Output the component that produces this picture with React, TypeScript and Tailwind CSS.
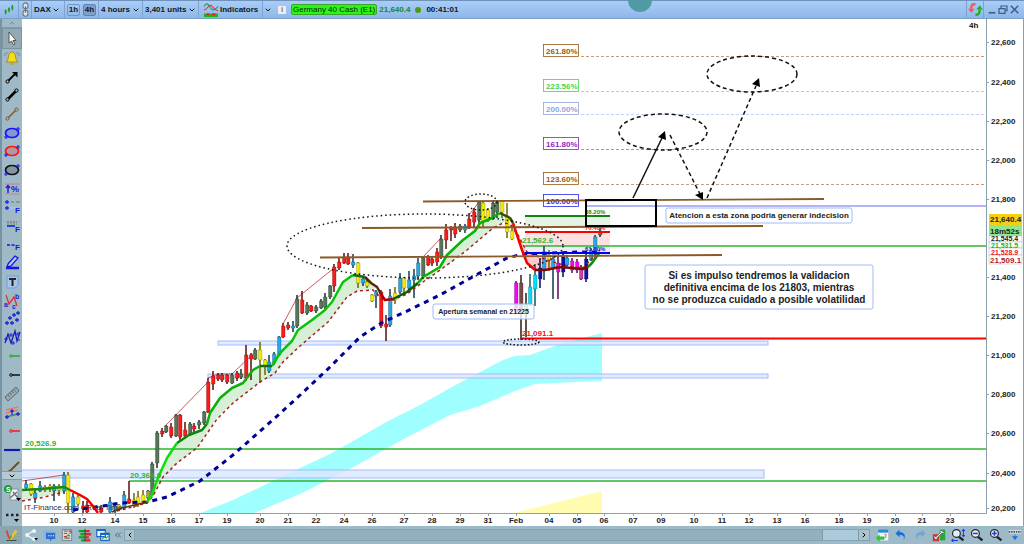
import { ReactNode } from "react";
import { ChevronDown, ChevronLeft, ChevronRight, ChevronUp, ChevronsLeft } from "lucide-react";

const GRAY = "#56755a";
const RED = "#ff1a1a";
const BLUE = "#27a8e6";
const YELLOW = "#f4ea00";
const CYAN = "#00dff5";
const MAGENTA = "#f0f";
const NAVY = "#1010a8";

const wicks: Record<string, string> = {
  [GRAY]: "#1d2b1d",
  [RED]: "#5c0b0b",
  [BLUE]: "#123a4d",
  [YELLOW]: "#6b6600",
  [CYAN]: "#0b5a60",
  [MAGENTA]: "#5a065a",
  [NAVY]: "#0a0a50",
};

// x, high, low, body top, body bottom, colour
type Candle = [number, number, number, number, number, string];

const candles: Candle[] = [
  [26, 480, 490, 484, 488, BLUE],
  [31, 483, 496, 484, 494, YELLOW],
  [35, 488, 503, 493, 498, BLUE],
  [40, 481, 492, 486, 491, BLUE],
  [45, 485, 492, 487, 490, YELLOW],
  [50, 484, 492, 486, 489, YELLOW],
  [54, 484, 501, 486, 491, BLUE],
  [59, 484, 496, 486, 490, YELLOW],
  [64, 472, 494, 475, 491, BLUE],
  [68, 472, 513, 475, 503, YELLOW],
  [73, 493, 513, 497, 512, BLUE],
  [78, 495, 506, 497, 504, YELLOW],
  [83, 501, 513, 506, 509, RED],
  [87, 501, 513, 505, 512, RED],
  [101, 505, 513, 508, 512, RED],
  [110, 497, 513, 502, 512, BLUE],
  [115, 504, 513, 506, 511, BLUE],
  [119, 504, 510, 505, 509, YELLOW],
  [124, 491, 510, 495, 508, BLUE],
  [129, 481, 504, 499, 503, RED],
  [134, 493, 508, 500, 505, YELLOW],
  [138, 491, 507, 497, 504, YELLOW],
  [143, 490, 504, 495, 502, YELLOW],
  [148, 490, 500, 491, 498, "#9aae20"],
  [152, 462, 496, 464, 495, GRAY],
  [157, 431, 468, 433, 463, GRAY],
  [162, 428, 437, 431, 434, RED],
  [166, 425, 433, 426, 432, GRAY],
  [171, 423, 438, 427, 436, RED],
  [176, 414, 437, 415, 436, GRAY],
  [180, 414, 440, 415, 437, RED],
  [185, 422, 439, 430, 436, RED],
  [190, 422, 436, 424, 434, GRAY],
  [194, 423, 434, 426, 429, RED],
  [199, 420, 429, 422, 425, GRAY],
  [204, 411, 425, 412, 423, GRAY],
  [208, 378, 413, 382, 412, RED],
  [213, 371, 390, 376, 384, RED],
  [218, 373, 381, 375, 379, RED],
  [222, 373, 382, 375, 380, RED],
  [227, 374, 384, 375, 382, RED],
  [232, 373, 384, 375, 383, GRAY],
  [237, 371, 381, 373, 378, RED],
  [241, 369, 379, 374, 377, GRAY],
  [246, 345, 381, 355, 378, RED],
  [251, 353, 380, 355, 359, RED],
  [255, 348, 360, 350, 359, GRAY],
  [260, 342, 383, 350, 360, YELLOW],
  [265, 359, 375, 360, 366, YELLOW],
  [269, 355, 373, 362, 371, BLUE],
  [274, 352, 365, 354, 363, BLUE],
  [279, 336, 356, 337, 355, BLUE],
  [283, 323, 338, 326, 337, RED],
  [288, 322, 330, 325, 328, RED],
  [293, 321, 332, 326, 328, BLUE],
  [297, 295, 328, 299, 326, GRAY],
  [302, 291, 314, 300, 313, RED],
  [307, 302, 315, 305, 313, GRAY],
  [311, 305, 312, 306, 311, RED],
  [316, 305, 313, 307, 311, GRAY],
  [321, 299, 309, 301, 308, GRAY],
  [325, 293, 309, 297, 307, GRAY],
  [330, 285, 299, 286, 297, GRAY],
  [334, 264, 292, 267, 286, RED],
  [339, 258, 270, 262, 268, RED],
  [344, 253, 264, 257, 263, RED],
  [348, 253, 265, 257, 264, RED],
  [353, 254, 268, 262, 265, BLUE],
  [358, 262, 288, 263, 283, YELLOW],
  [363, 276, 286, 279, 283, BLUE],
  [367, 280, 288, 282, 286, YELLOW],
  [372, 294, 302, 295, 301, YELLOW],
  [376, 290, 308, 292, 296, BLUE],
  [381, 290, 328, 292, 326, RED],
  [386, 315, 341, 324, 327, RED],
  [390, 289, 327, 296, 325, BLUE],
  [395, 287, 304, 293, 300, YELLOW],
  [400, 273, 294, 278, 292, BLUE],
  [404, 277, 295, 278, 288, YELLOW],
  [409, 271, 292, 280, 288, BLUE],
  [414, 269, 298, 276, 280, BLUE],
  [418, 258, 280, 263, 276, BLUE],
  [423, 256, 279, 258, 276, GRAY],
  [428, 255, 266, 257, 265, RED],
  [432, 257, 266, 259, 263, RED],
  [437, 248, 266, 252, 262, RED],
  [441, 235, 259, 239, 257, GRAY],
  [446, 224, 249, 230, 240, RED],
  [451, 226, 241, 228, 230, RED],
  [455, 223, 238, 227, 234, RED],
  [460, 224, 232, 226, 230, GRAY],
  [465, 224, 233, 226, 230, BLUE],
  [469, 213, 229, 219, 227, RED],
  [474, 208, 228, 212, 222, RED],
  [479, 201, 224, 202, 220, GRAY],
  [483, 201, 227, 203, 222, YELLOW],
  [488, 208, 222, 210, 220, YELLOW],
  [493, 200, 220, 203, 218, GRAY],
  [497, 200, 218, 202, 212, GRAY],
  [502, 200, 218, 201, 212, YELLOW],
  [507, 203, 238, 216, 232, YELLOW],
  [512, 225, 240, 231, 239, YELLOW],
  [516, 281, 313, 283, 312, MAGENTA],
  [521, 275, 340, 283, 309, "#7a4b4b"],
  [526, 293, 337, 304, 313, "#10e010"],
  [530, 274, 306, 287, 304, CYAN],
  [535, 264, 306, 275, 289, CYAN],
  [540, 258, 288, 268, 279, NAVY],
  [544, 246, 280, 253, 269, BLUE],
  [549, 250, 271, 255, 260, YELLOW],
  [553, 256, 299, 259, 269, BLUE],
  [558, 256, 299, 263, 272, MAGENTA],
  [563, 254, 277, 257, 272, NAVY],
  [567, 255, 266, 258, 265, BLUE],
  [572, 258, 273, 261, 270, MAGENTA],
  [577, 259, 273, 262, 270, MAGENTA],
  [581, 265, 280, 267, 279, "#d040a0"],
  [586, 254, 282, 259, 279, NAVY],
  [591, 248, 261, 251, 260, BLUE],
  [595, 235, 259, 237, 253, BLUE],
  [600, 227, 237, 231, 235, GRAY],
];

const priceLabels: [string, number][] = [
  ["22,600", 42],
  ["22,400", 82],
  ["22,200", 121],
  ["22,000", 160],
  ["21,800", 199],
  ["21,400", 277],
  ["21,200", 316],
  ["21,000", 355],
  ["20,800", 394],
  ["20,600", 433],
  ["20,400", 473],
  ["20,200", 508],
];

const timeLabels: [string, number][] = [
  ["10", 54], ["12", 82], ["14", 115], ["15", 143], ["16", 171], ["17", 199], ["19", 227],
  ["20", 260], ["21", 288], ["22", 316], ["24", 344], ["26", 372], ["27", 404], ["28", 432],
  ["29", 460], ["31", 488], ["Feb", 516], ["04", 549], ["05", 577], ["06", 604], ["07", 633],
  ["09", 661], ["10", 694], ["11", 722], ["12", 749], ["13", 777], ["16", 805], ["18", 839],
  ["19", 867], ["20", 895], ["21", 922], ["23", 950],
];

const extensions = [
  { label: "261.80%", y: 56, color: "#965a1e", line: "#c89a76" },
  { label: "223.56%", y: 91, color: "#4bd24b", line: "#9be59b" },
  { label: "200.00%", y: 114, color: "#8ea4e0", line: "#c3d0fa" },
  { label: "161.80%", y: 149, color: "#8f1fc0", line: "#c77ae4" },
  { label: "123.60%", y: 184, color: "#965a1e", line: "#c89a76" },
  { label: "100.00%", y: 206, color: "#2a2aee", line: "" },
];

const tools: { name: string; art: ReactNode }[] = [
  {
    name: "Pointer",
    art: <path d="M6 3v11l2.500-2 2 4 1.500-1-2-3.500h3z" fill="#fff" stroke="#555" />,
  },
  {
    name: "Alert",
    art: (
      <>
        <path d="M3 13c2-1 2-3 2.500-6C6 4 7.500 3 9 3s3 1 3.500 4c.5 3 .5 5 2.500 6z" fill="#f5dc1c" stroke="#9c8300" strokeWidth=".8" />
        <circle cx="9" cy="14.500" r="1.500" fill="#c8a800" />
        <path d="M2 4v3M16 4v3M4 3v2M14 3v2" stroke="#6f7f88" strokeWidth=".8" />
      </>
    ),
  },
  {
    name: "Arrow",
    art: (
      <>
        <path d="M5 13l7-7" stroke="#000" strokeWidth="1.800" />
        <path d="M9 4h5.500v5.500z" fill="#000" />
        <circle cx="4.500" cy="13.500" r="1.600" fill="#9fbac6" stroke="#000" />
      </>
    ),
  },
  {
    name: "Segment",
    art: (
      <>
        <path d="M5 13l8-8" stroke="#000" strokeWidth="2.500" />
        <circle cx="4.500" cy="13.500" r="1.600" fill="#9fbac6" stroke="#000" />
        <circle cx="13.500" cy="4.500" r="1.600" fill="#9fbac6" stroke="#000" />
      </>
    ),
  },
  {
    name: "Brown segment",
    art: (
      <>
        <path d="M5 13l8-8" stroke="#8a5216" strokeWidth="1.500" />
        <circle cx="4.500" cy="13.500" r="1.600" fill="#9fbac6" stroke="#8a5216" />
        <circle cx="13.500" cy="4.500" r="1.600" fill="#9fbac6" stroke="#8a5216" />
      </>
    ),
  },
  { name: "Blue ellipse", art: <EllipseArt color="#1414ff" /> },
  { name: "Red ellipse", art: <EllipseArt color="#ff1414" /> },
  { name: "Black ellipse", art: <EllipseArt color="#111" /> },
  {
    name: "Percent change",
    art: (
      <>
        <path d="M2 4h15M2 14h15" stroke="#d87a8a" />
        <text x="8" y="12" fontSize="9" fontWeight="bold" fill="#2222d0">%</text>
        <path d="M5 13V6M3 8l2-2.500L7 8" fill="none" stroke="#2222d0" strokeWidth="1.500" />
      </>
    ),
  },
  {
    name: "Fibonacci extension",
    art: (
      <>
        <path d="M2 4h4M4 2v4M2 10h4M4 8v4" stroke="#2222ee" strokeWidth="1.300" />
        <path d="M8 4h3M13 4h4" stroke="#8a6a3a" />
        <path d="M7 10h6" stroke="#b8ccf5" />
        <text x="12" y="15" fontSize="8" fontWeight="bold" fill="#1414e6">F</text>
      </>
    ),
  },
  {
    name: "Fibonacci retracement",
    art: (
      <>
        <path d="M4 5h10" stroke="#7a5a5a" strokeDasharray="2 1" />
        <path d="M4 7h10" stroke="#5aa05a" strokeDasharray="2 1" />
        <path d="M4 9h8" stroke="#1414e6" strokeWidth="1.500" />
        <text x="12" y="15" fontSize="8" fontWeight="bold" fill="#1414e6">F</text>
      </>
    ),
  },
  {
    name: "Fibonacci level",
    art: (
      <>
        <path d="M4 9h3M8.500 9h3" stroke="#1414e6" strokeWidth="1.500" />
        <text x="12" y="14" fontSize="8" fontWeight="bold" fill="#1414e6">F</text>
      </>
    ),
  },
  {
    name: "Pencil",
    art: (
      <>
        <path d="M5 10l7-8 3 2-7 8-4 1z" fill="#b8cdf5" stroke="#1414e6" strokeWidth="1.300" />
        <path d="M3 14h13" stroke="#1414e6" strokeWidth="2.500" />
      </>
    ),
  },
  {
    name: "Text",
    art: (
      <>
        <path d="M4 3h11v9l-3 3H4z" fill="#a9c4e4" stroke="#6a9cec" />
        <path d="M6 6h7M9.500 6v7" stroke="#222" strokeWidth="2" />
      </>
    ),
  },
  {
    name: "Abc pattern",
    art: (
      <>
        <path d="M3 3l3 9 5-7 3 9" fill="none" stroke="#e03040" strokeWidth="1.300" />
        <text x="1" y="15" fontSize="7" fontWeight="bold" fill="#2222d0">a</text>
        <text x="12" y="7" fontSize="7" fontWeight="bold" fill="#2222d0">b</text>
        <text x="9" y="17" fontSize="7" fontWeight="bold" fill="#2222d0">c</text>
      </>
    ),
  },
  {
    name: "Cycle points",
    art: (
      <path
        d="M2 13h4M4 11v4M5 8h4M7 6v4M7 13h4M9 11v4M9 5h4M11 3v4M12 10h4M14 8v4M13 3h4M15 1v4"
        stroke="#2222d8"
        strokeWidth="1.300"
      />
    ),
  },
  {
    name: "Elliott wave",
    art: (
      <>
        <path d="M2 14l3-9 3 9 4-12 2 10 3-9" fill="none" stroke="#1c1cae" strokeWidth="1.300" />
        <path d="M1 10h4M3 8v4M6 6h4M8 4v4M8 14h4M10 12v4M13 5h4M15 3v4M13 11h4" stroke="#2222d8" />
      </>
    ),
  },
  { name: "Green ray", art: <RayArt color="#22a822" /> },
  { name: "Black ray", art: <RayArt color="#111" /> },
  {
    name: "Ruler",
    art: (
      <>
        <path d="M2 12L13 2l3 4L5 16z" fill="#9aaab0" stroke="#5c6a70" />
        <path d="M5 10l1.500 2M7 8l1.500 2M9 6l1.500 2M11 4.500l1.500 2" stroke="#5c6a70" />
      </>
    ),
  },
  {
    name: "Channel",
    art: (
      <>
        <path d="M3 7l12-3M3 10l12-3" stroke="#e87868" strokeWidth="1.300" />
        <path d="M3 14l12-3" stroke="#2c9c3c" strokeWidth="1.500" />
        <path d="M2 14h4M4 12v4M13 11h4M15 9v4M9 12V7M7.500 8.500L9 7l1.500 1.500" fill="none" stroke="#2222d8" strokeWidth="1.300" />
      </>
    ),
  },
  { name: "Red ray", art: <RayArt color="#ff1414" /> },
  { name: "Horizontal line", art: <path d="M1 9h16" stroke="#1414b4" strokeWidth="2.200" /> },
];

function EllipseArt({ color }: { color: string }) {
  return (
    <>
      <ellipse cx="9" cy="9" rx="6.500" ry="4.500" fill={color} fillOpacity=".2" stroke={color} strokeWidth="1.700" />
      <path d="M1 13h4M3 11v4M13 5h4M15 3v4" stroke="#2222ee" strokeWidth="1.200" />
    </>
  );
}

function RayArt({ color }: { color: string }) {
  return (
    <>
      <circle cx="8" cy="9" r="1.300" fill="none" stroke={color} />
      <path d="M9 9h8" stroke={color} strokeWidth="1.500" />
    </>
  );
}

function Art({ children, className = "size-[18px]" }: { children: ReactNode; className?: string }) {
  return (
    <svg viewBox="0 0 18 18" className={`shrink-0 ${className}`} aria-hidden="true">
      {children}
    </svg>
  );
}

function Dropdown({ label, value, className }: { label: string; value: string; className: string }) {
  return (
    <label className={`flex h-full items-center border-r border-[#7fa3cc] ${className}`}>
      <select aria-label={label} className="flex-1 appearance-none bg-transparent outline-none">
        <option>{value}</option>
      </select>
      <ChevronDown className="size-2" strokeWidth={3} />
    </label>
  );
}

function Header() {
  return (
    <header className="flex h-[19px] items-center border-t border-b border-t-[#6f93b8] border-b-[#7a9fc8] bg-linear-to-b from-[#a9cdfa] to-[#8fb7e6] text-[8px] font-bold text-[#101820]">
      <button aria-label="Chart type" className="flex h-full w-[19px] items-center justify-center border-r border-[#7fa3cc]">
        <Art className="size-3">
          <path d="M4 8v8M9 5v8M14 1v9" stroke="#1d5e1d" />
          <path d="M4 9v5M9 6v5M14 3v5" stroke="#2c9a2c" strokeWidth="3" />
        </Art>
      </button>
      <button aria-label="Link charts" className="flex h-full w-[13px] items-center justify-center border-r border-[#7fa3cc]">
        <Art className="size-[15px]">
          <g fill="#dde3e6" stroke="#6b7478" strokeWidth="1.300">
            <rect x="6" y="1" width="6" height="7" rx="3" />
            <rect x="6" y="10" width="6" height="7" rx="3" />
            <path d="M9 5v8" />
          </g>
        </Art>
      </button>
      <Dropdown label="Instrument" value="DAX" className="w-[33px] pl-[2px] pr-1" />
      <div className="flex h-full w-[34px] items-center gap-[3px] border-r border-[#7fa3cc] px-[2px]">
        <button className="h-3 w-[13px] rounded-xs border border-[#7396c4] leading-none">1h</button>
        <button className="h-3 w-[13px] rounded-xs border border-[#5f84b4] bg-[#7d9fcb] leading-none">4h</button>
      </div>
      <Dropdown label="Timeframe" value="4 hours" className="w-[44px] pl-[2px] pr-[2px]" />
      <Dropdown label="History" value="3,401 units" className="w-[56px] pl-[2px] pr-[2px]" />
      <button className="flex h-full w-[64px] items-center gap-px border-r border-[#7fa3cc] pl-1">
        <Art className="size-4">
          <path d="M1 5c3-5 5-3 7 1s5 4 9-1" fill="none" stroke="#2f9f4f" strokeWidth="1.300" />
          <path d="M1 9c4 0 5-7 8-5s4 5 8 6" fill="none" stroke="#d04050" strokeWidth="1.300" />
          <path d="M1 13h16v4H1z" fill="#18b818" />
          <path d="M4 13h3v2H4zM10 13h4v2h-4z" fill="#e02020" />
        </Art>
        Indicators
      </button>
      <button aria-label="More indicators" className="flex w-[9px] justify-center">
        <ChevronDown className="size-2" strokeWidth={3} />
      </button>
      <button aria-label="Instrument information" className="mr-[5px] ml-[6px] h-2 w-2 bg-[#eee] leading-none text-[#777]">
        i
      </button>
      <span className="rounded-xs border border-[#39a828] bg-[#2cf516] px-px leading-[9px] font-normal">Germany 40 Cash (E1)</span>
      <span className="ml-[2px] text-[#118a2c]">21,640.4</span>
      <span className="mx-[5px] size-[6px] rounded-full bg-[#4b9d0c]" />
      <span>00:41:01</span>
      <div className="ml-auto flex h-full items-center">
        <button aria-label="Refresh" className="flex h-full w-[18px] items-center justify-center border-x border-[#7fa3cc]">
          <Art className="size-[15px]">
            <path d="M9 3C5 2 4 4 4 8" fill="none" stroke="#ef5a5a" strokeWidth="3" />
            <path d="M0 8h8l-4 5z" fill="#ef5a5a" />
            <path d="M9 15c4 1 5-2 5-6" fill="none" stroke="#22b022" strokeWidth="3" />
            <path d="M10 9h8l-4-5z" fill="#22b022" />
          </Art>
        </button>
        <button aria-label="Minimize" className="ml-[3px]">
          <Art className="size-[10px]"><path d="M3 14h12" stroke="#3f5f86" strokeWidth="3" /></Art>
        </button>
        <button aria-label="Restore">
          <Art className="size-3"><path d="M6 6V3h9v7h-3M3 7h9v7H3z" fill="none" stroke="#3f5f86" strokeWidth="1.800" /></Art>
        </button>
        <button aria-label="Close" className="mr-1">
          <Art className="size-[11px]"><path d="M3 3l12 12M15 3L3 15" stroke="#3f5f86" strokeWidth="2.500" /></Art>
        </button>
      </div>
    </header>
  );
}

function Sidebar() {
  return (
    <aside className="flex w-[22px] shrink-0 flex-col border-l-2 border-[#7894a2] bg-[#9fbac6]">
      <button aria-label="Scroll tools up" className="flex h-[9px] items-center justify-center border-b border-[#7f9aa8]">
        <ChevronUp className="size-2 text-[#55707e]" />
      </button>
      {tools.map((tool, i) => (
        <button
          key={tool.name}
          aria-label={tool.name}
          className={`flex min-h-0 flex-1 items-center justify-center ${i === 0 ? "border border-[#7b939f] bg-[#93a9b3]" : ""}`}
        >
          <Art className="size-[18px]">{tool.art}</Art>
        </button>
      ))}
      <button aria-label="Brush" className="h-3 overflow-hidden">
        <Art><path d="M4 14l5-3 8-8" fill="none" stroke="#7c4a14" strokeWidth="2" /></Art>
      </button>
      <button aria-label="Scroll tools down" className="flex h-[9px] items-center justify-center border-y border-[#7f9aa8] bg-[#b4cbd5]">
        <ChevronDown className="size-2" strokeWidth={3} />
      </button>
      <button aria-label="Manage objects" className="flex h-[26px] items-center justify-center">
        <Art>
          <path d="M7 5h8v11H7z" fill="#eef2f4" stroke="#8a979e" />
          <circle cx="5" cy="5" r="4" fill="#229a38" />
          <text x="3" y="8" fontSize="7" fontWeight="bold" fill="#fff">S</text>
          <path d="M7 14l7-6M10 8l5 6" stroke="#6d7579" strokeWidth="1.500" />
          <path d="M13 14h5l-2.500 3z" />
        </Art>
      </button>
      <button aria-label="More tools" className="flex h-[20px] items-center justify-center">
        <Art>
          <path d="M3 8h2.500M8 8h2.500M13 8h2.500" stroke="#222" strokeWidth="2.500" />
          <path d="M11 12h5l-2.500 3z" />
        </Art>
      </button>
    </aside>
  );
}

function Note({ x, y, w, h, size, lines }: { x: number; y: number; w: number; h: number; size: number; lines: string[] }) {
  const step = size + 2;
  const first = y + h / 2 - ((lines.length - 1) * step) / 2 + size * 0.36;
  return (
    <g>
      <rect x={x} y={y} width={w} height={h} rx="2" fill="#fff" fillOpacity=".8" stroke="#9fbcf5" />
      {lines.map((line, i) => (
        <text key={line} x={x + w / 2} y={first + i * step} fontSize={size} textAnchor="middle" fill="#222">
          {line}
        </text>
      ))}
    </g>
  );
}

function Chart() {
  return (
    <svg
      viewBox="22 19 1002 507"
      className="min-w-0 flex-1 bg-white"
      fontFamily="'Liberation Sans', Arial, sans-serif"
      fontSize="8"
      fontWeight="bold"
      role="img"
      aria-label="DAX 4 hour candlestick chart"
    >
      <defs>
        <clipPath id="plot">
          <rect x="22" y="19" width="964" height="494" />
        </clipPath>
      </defs>

      <g clipPath="url(#plot)">
        {/* cloud */}
        <path d="M198 514L233 500L300 468L330 454L390 420L420 405L450 388L503 360L515 356L530 355L560 344L602 333V381L575 382L535 384L515 391L480 406L450 415L400 441L350 469L300 494L252 514Z" fill="#9fffff" />
        <path d="M510 514L602 491V514Z" fill="#fffcb0" />

        {/* support zones */}
        <g fill="#dbe6ff" fillOpacity=".8" stroke="#a3bdf5">
          <rect x="218" y="341" width="550" height="4" />
          <rect x="208" y="374" width="560" height="4" />
          <rect x="20" y="470" width="744" height="8" />
        </g>

        {/* band between both averages */}
        <path
          d="M22 490L64 488L70 491L45 496L22 501ZM147 502L152 495L157 480L167 458L177 443L202 430L210 413L220 398L232 388L243 383L253 370L260 366L272 366L280 353L292 341L298 330L312 320L325 310L332 302L343 282L353 275L365 277L377 287L373 290L357 291L347 297L328 322L300 346L283 362L275 373L260 382L233 403L217 417L197 448L177 463L163 477L153 496Z"
          fill="#d7efd7"
        />
        <path d="M400 293L423 277L440 267L447 255L463 240L480 223L500 213L510 218L503 223L493 228L467 250L443 268L423 282Z" fill="#d7efd7" />
        <path d="M515 228L522 250L527 263L535 270L560 267L547 260L527 252Z" fill="#ffc9c9" />
        <rect x="525" y="216" width="85" height="10" fill="#e4f3e4" />
        <rect x="525" y="232" width="85" height="14" fill="#fde0e0" />
        <rect x="525" y="246" width="85" height="7" fill="#ececf5" />

        {/* pivots */}
        <path d="M22 481L64 475M166 425L208 382M208 378L218 374L232 374L257 350M283 324L297 298L334 268M423 257L441 238M469 215L479 202" fill="none" stroke="#c03030" strokeWidth=".8" />

        {/* horizontal levels */}
        <g strokeWidth="1.500">
          <path d="M22 449H986M129 481H986M525 246H986" stroke="#2fb52f" />
          <path d="M522 338.500H986" stroke="#f00" strokeWidth="2" />
          <path d="M586 206H986" stroke="#9a9af5" />
        </g>

        {candles.map(([x, high, low, top, bottom, color]) => (
          <g key={x}>
            <path d={`M${x} ${high}V${low}`} stroke={wicks[color] ?? "#301818"} strokeWidth="1.500" />
            <rect x={x - 1.5} y={top} width="3.500" height={bottom - top} fill={color} stroke={wicks[color] ?? "#301818"} strokeWidth=".3" />
          </g>
        ))}

        {/* slow average */}
        <path
          d="M22 501L45 497L64 492M117 511L147 503L153 496L163 477L177 463L197 448L217 419L233 403L260 382L275 373L283 362L300 346L328 322L347 297L357 291L373 290L383 300L393 300L407 294L423 282L443 268L467 250L493 228L503 223L510 224L518 235L527 252L547 260L567 266L583 268L600 250"
          fill="none"
          stroke="#a82020"
          strokeWidth="1.500"
          strokeDasharray="3 3"
        />

        {/* long average */}
        <path
          d="M73 510L103 506L120 503L147 502L167 497L200 481L233 455L275 418L298 397L330 367L360 337L383 322L403 313L440 295L467 280L507 258L523 254L580 252L602 253"
          fill="none"
          stroke="#000096"
          strokeWidth="3"
          strokeDasharray="5 5"
        />

        {/* fast average, coloured by slope */}
        <g fill="none" strokeWidth="2.500" strokeLinejoin="round">
          <path d="M22 490L40 489L64 487L70 490" stroke="#158a15" />
          <path d="M70 490L80 495L87 499L93 506L98 513" stroke="#f00000" />
          <path d="M112 512L122 508L147 502" stroke="#5a3a10" strokeWidth="1.500" />
          <path d="M147 502L152 495L157 480L167 458L177 443" stroke="#0be00b" />
          <path d="M177 443L189 435L202 430L207 424" stroke="#0c850c" />
          <path d="M207 424L210 413L220 398L232 388L243 383L253 370L260 366" stroke="#08b008" />
          <path d="M260 366L272 366" stroke="#0c700c" />
          <path d="M272 366L280 353L292 341L298 330L312 320L325 310L332 302L343 282L353 275" stroke="#06c406" />
          <path d="M353 275L365 277" stroke="#0c700c" />
          <path d="M365 277L371 283L377 287L381 294" stroke="#502a0a" />
          <path d="M381 294L385 300L393 299" stroke="#b00000" />
          <path d="M393 299L407 292L418 283" stroke="#0a5a0a" />
          <path d="M418 283L423 277L440 267L447 255L463 240L475 231L480 223L490 219L500 213" stroke="#06b406" />
          <path d="M500 213L510 218L513 223" stroke="#304a0a" />
          <path d="M513 223L516 232L522 250L527 263L535 270" stroke="#f50000" />
          <path d="M535 270L545 270L560 267L583 269L588 267" stroke="#800a0a" />
          <path d="M588 267L592 263L600 252" stroke="#0a900a" />
        </g>

        {/* retracement */}
        <path d="M525 216H610" stroke="#128512" strokeWidth="2" />
        <path d="M525 232H610" stroke="#f00" strokeWidth="2" />
        <path d="M525 253H610" stroke="#0000f5" strokeWidth="2" />
        <g fontSize="6">
          <text x="585" y="214" fill="#1c8a1c">38.20%</text>
          <text x="585" y="230" fill="#f22">76.40%</text>
          <text x="585" y="251" fill="#22c">61.80%</text>
        </g>

        {/* extension */}
        {extensions.map((level) => (
          <g key={level.label}>
            <rect x="543.500" y={level.y - 11.5} width="35" height="12" fill="#fff" stroke={level.color} strokeWidth=".8" />
            <text x="546" y={level.y - 2} fill={level.color}>{level.label}</text>
            {level.line && <path d={`M581 ${level.y + 0.5}H986`} stroke={level.line} strokeDasharray="3 2" />}
          </g>
        ))}

        <g fill="#2fb52f">
          <text x="25" y="446">20,526.9</text>
          <text x="130" y="478">20,364.0</text>
          <text x="522" y="243">21,562.6</text>
        </g>
        <text x="522" y="336" fill="#f01414">21,091.1</text>

        <path d="M423 201.500L824 199M362 228L763 226M320 257.500L722 255" stroke="#8c5a28" strokeWidth="1.800" />
        <rect x="586" y="200" width="70" height="26" fill="none" stroke="#000" strokeWidth="2" />

        <g fill="none" stroke="#111" strokeWidth="1.500">
          <ellipse cx="425" cy="246" rx="138" ry="32" strokeDasharray="1.500 3" />
          <ellipse cx="481" cy="202" rx="16" ry="8" strokeDasharray="1.500 2.500" />
          <ellipse cx="521" cy="342" rx="18" ry="3" strokeDasharray="1.500 2" />
          <ellipse cx="663" cy="132" rx="44" ry="18" strokeDasharray="4 3" />
          <ellipse cx="752" cy="74" rx="45" ry="18" strokeDasharray="4 3" />
          <path d="M633 198L662 138" />
          <path d="M670 135L700 194M707 198L756 86" strokeDasharray="4 3" />
        </g>
        <path d="M665 131L658 137L666 140ZM703 200L695 195L703 192ZM759 78L752 84L760 87Z" />

        <Note x={433} y={304} w={101} h={15} size={7} lines={["Apertura semanal en 21225"]} />
        <Note x={666} y={208} w={186} h={15} size={8} lines={["Atencion a esta zona podria generar indecision"]} />
        <Note
          x={645}
          y={265}
          w={228}
          h={44}
          size={10}
          lines={[
            "Si es impulso tendremos la validacion",
            "definitiva encima de los 21803, mientras",
            "no se produzca cuidado a posible volatilidad",
          ]}
        />
        <text x="24" y="510" fontWeight="normal" fill="#333">IT-Finance.com - Real Time</text>
        <text x="969" y="28" fill="#111">4h</text>
      </g>

      {/* axes */}
      <path d="M986.500 19V513.500H22M1023.500 19V526" fill="none" stroke="#8aa0aa" />
      {priceLabels.map(([label, y]) => (
        <g key={label}>
          <path d={`M986 ${y + 0.5}H989`} stroke="#8aa0aa" />
          <text x="991" y={y + 3} fill="#222">{label}</text>
        </g>
      ))}
      {timeLabels.map(([label, x]) => (
        <g key={x}>
          <path d={`M${x + 0.5} 513V516`} stroke="#8aa0aa" />
          <text x={x} y="523" textAnchor="middle" fill="#222">{label}</text>
        </g>
      ))}

      {/* price tags */}
      <g fill="#fff" stroke="#aab4b8" strokeWidth=".5">
        <rect x="989" y="236" width="33" height="6" />
        <rect x="989" y="242" width="33" height="6" />
        <rect x="989" y="248" width="33" height="7" />
        <rect x="989" y="255" width="33" height="9" />
      </g>
      <g fontSize="7">
        <text x="991" y="241" fill="#222">21,545.4</text>
        <text x="991" y="248" fill="#10c010">21,531.5</text>
        <text x="991" y="255" fill="#f01414">21,528.9</text>
      </g>
      <text x="990" y="263" fill="#b01c1c">21,509.1</text>
      <rect x="989" y="214" width="33" height="11" fill="#f5cf14" />
      <text x="990" y="222" fill="#222">21,640.4</text>
      <rect x="989" y="225" width="33" height="11" fill="#8de88d" />
      <text x="990" y="234" fill="#222">18m52s</text>
    </svg>
  );
}

const leftActions: { name: string; art: ReactNode }[] = [
  {
    name: "Share",
    art: (
      <>
        <path d="M13 3L4 9l9 6" fill="none" stroke="#f4f8fa" strokeWidth="1.500" />
        <g fill="#f4f8fa"><circle cx="13" cy="4" r="2.500" /><circle cx="4" cy="9" r="2.500" /><circle cx="13" cy="14" r="2.500" /></g>
        <path d="M13 13h5l-2.500 3z" />
      </>
    ),
  },
  {
    name: "Chat",
    art: (
      <>
        <path d="M2 3h11v8H2z" fill="#8db3e6" />
        <path d="M5 6h12v8h-4l-3 3v-3H5z" fill="#2f6fd0" />
        <path d="M8 10h1.500M11 10h1.500M14 10h1.500" stroke="#fff" strokeWidth="1.500" />
      </>
    ),
  },
  {
    name: "News",
    art: (
      <>
        <path d="M3 2h12v14H3z" fill="#d8dcdc" stroke="#6d7578" />
        <path d="M5 4h5M5 7h4M9 10h4M9 13h4" stroke="#303a3a" />
        <path d="M11 4h3v3M5 11h3v3" fill="none" stroke="#d03030" strokeWidth="1.500" />
        <path d="M5 14l8-8" stroke="#309a30" />
      </>
    ),
  },
  {
    name: "Order book",
    art: (
      <>
        <path d="M1 4h8M3 8h6M1 12h8M4 16h5" stroke="#16a026" strokeWidth="3" />
        <path d="M9 4h6M9 8h8M9 12h5M9 16h7" stroke="#e02828" strokeWidth="3" />
        <path d="M9 1v16" stroke="#333" />
      </>
    ),
  },
  {
    name: "Windows",
    art: (
      <>
        <path d="M1 2h11v9H1zM6 7h11v9H6z" fill="#eaf4ff" stroke="#1c64c8" strokeWidth="1.500" />
        <path d="M1 3h11M6 8h11" stroke="#1c64c8" strokeWidth="2" />
        <path d="M8 14l3-3 2 2 3-3" fill="none" stroke="#20a030" strokeWidth="1.300" />
      </>
    ),
  },
];

const zoomLens = (
  <>
    <path d="M10 11l6 5" stroke="#222" strokeWidth="3" />
    <circle cx="7" cy="7" r="5" fill="#e6eef8" stroke="#222" strokeWidth="1.500" />
  </>
);

const rightActions: { name: string; art: ReactNode }[] = [
  {
    name: "Go to date",
    art: (
      <>
        <path d="M4 4h13v12H4z" fill="#f2f6fa" />
        <path d="M4 4h13" stroke="#2c8ad8" strokeWidth="4" />
        <path d="M12 8h2v4h-2" fill="none" stroke="#d04040" />
        <path d="M1 13l5-5v3h6v4H6v3z" fill="#35c435" />
      </>
    ),
  },
  { name: "Undo", art: <path d="M2 7l5-5v3c7 0 9 5 5 11 2-5 0-7-5-7v3z" fill="#1470e0" /> },
  { name: "Redo", art: <path d="M16 7l-5-5v3c-7 0-9 5-5 11-2-5 0-7 5-7v3z" fill="#6da5d6" /> },
  {
    name: "Settings",
    art: (
      <>
        <path d="M1 8h8v9H1z" fill="#d83030" />
        <path d="M10 2h7v14h-7z" fill="#28a838" />
        <path d="M4 14l9-9M11 4l4 2M3 11l3 3" stroke="#555" strokeWidth="3" />
        <path d="M4 14l9-9M11 4l4 2M3 11l3 3" stroke="#e8eaea" strokeWidth="1.500" />
      </>
    ),
  },
  {
    name: "Fit zoom",
    art: <>{zoomLens}<path d="M16 2v9M14 4l2-2 2 2M14 9l2 2 2-2M1 16h8M3 14l-2 2 2 2" fill="none" stroke="#1c3cf0" strokeWidth="1.300" /></>,
  },
  { name: "Zoom out", art: <>{zoomLens}<path d="M4 7h6" stroke="#1c3cf0" strokeWidth="2" /></> },
  { name: "Zoom in", art: <>{zoomLens}<path d="M4 7h6M7 4v6" stroke="#1c3cf0" strokeWidth="2" /></> },
  {
    name: "Show panel",
    art: (
      <>
        <path d="M1 5h16" stroke="#f2f2f2" strokeWidth="4" />
        <path d="M1 5h16" stroke="#444" strokeWidth="2" strokeDasharray="2 1" />
        <path d="M9 8v5M6 11l3 4 3-4z" fill="#2070d8" stroke="#2070d8" />
      </>
    ),
  },
];

function Footer() {
  return (
    <footer className="flex h-[18px] items-center bg-[#9dbac8]">
      <button aria-label="Drawing tools" className="flex h-full w-[22px] items-center justify-center bg-[#8ba5b1]">
        <Art className="size-[15px]">
          <path d="M3 3l4 12" stroke="#d84030" strokeWidth="2" />
          <path d="M6 15l9-12" stroke="#f2c820" strokeWidth="3" />
          <path d="M3 15h12" stroke="#333" />
          <path d="M6 15l3-6" stroke="#2a9a3a" strokeWidth="1.500" />
        </Art>
      </button>
      {leftActions.map((action) => (
        <button key={action.name} aria-label={action.name} className="flex w-[18px] justify-center">
          <Art className="size-[14px]">{action.art}</Art>
        </button>
      ))}
      <button aria-label="Collapse" className="flex w-3 justify-center">
        <ChevronsLeft className="size-[10px] text-[#40545f]" />
      </button>
      <div className="mr-[2px] flex flex-1 items-center border border-[#86a2b0] bg-[#93b0be]">
        <button aria-label="Scroll left" className="flex h-[10px] w-[10px] items-center justify-center border-r border-[#86a2b0] bg-[#a9c3cf]">
          <ChevronLeft className="size-2" strokeWidth={3} />
        </button>
        <span className="ml-auto h-[10px] w-[37px] border-x border-[#7c9aaa] bg-[#a9cbdb]" />
        <button aria-label="Scroll right" className="flex h-[10px] w-[10px] items-center justify-center bg-[#a9c3cf]">
          <ChevronRight className="size-2" strokeWidth={3} />
        </button>
      </div>
      {rightActions.map((action) => (
        <button key={action.name} aria-label={action.name} className="flex w-[19px] justify-center">
          <Art className="size-[14px]">{action.art}</Art>
        </button>
      ))}
    </footer>
  );
}

// round grip that hangs from the top edge of the window
function TopGrip() {
  return <span className="absolute top-0 left-5/8 h-3 w-6 -translate-x-1/2 rounded-b-full bg-[#4f9aa5]" />;
}

export default function App() {
  return (
    <main className="relative bg-white font-['Liberation_Sans',Arial,sans-serif]">
      <Header />
      <TopGrip />
      <div className="flex">
        <Sidebar />
        <Chart />
      </div>
      <Footer />
    </main>
  );
}
